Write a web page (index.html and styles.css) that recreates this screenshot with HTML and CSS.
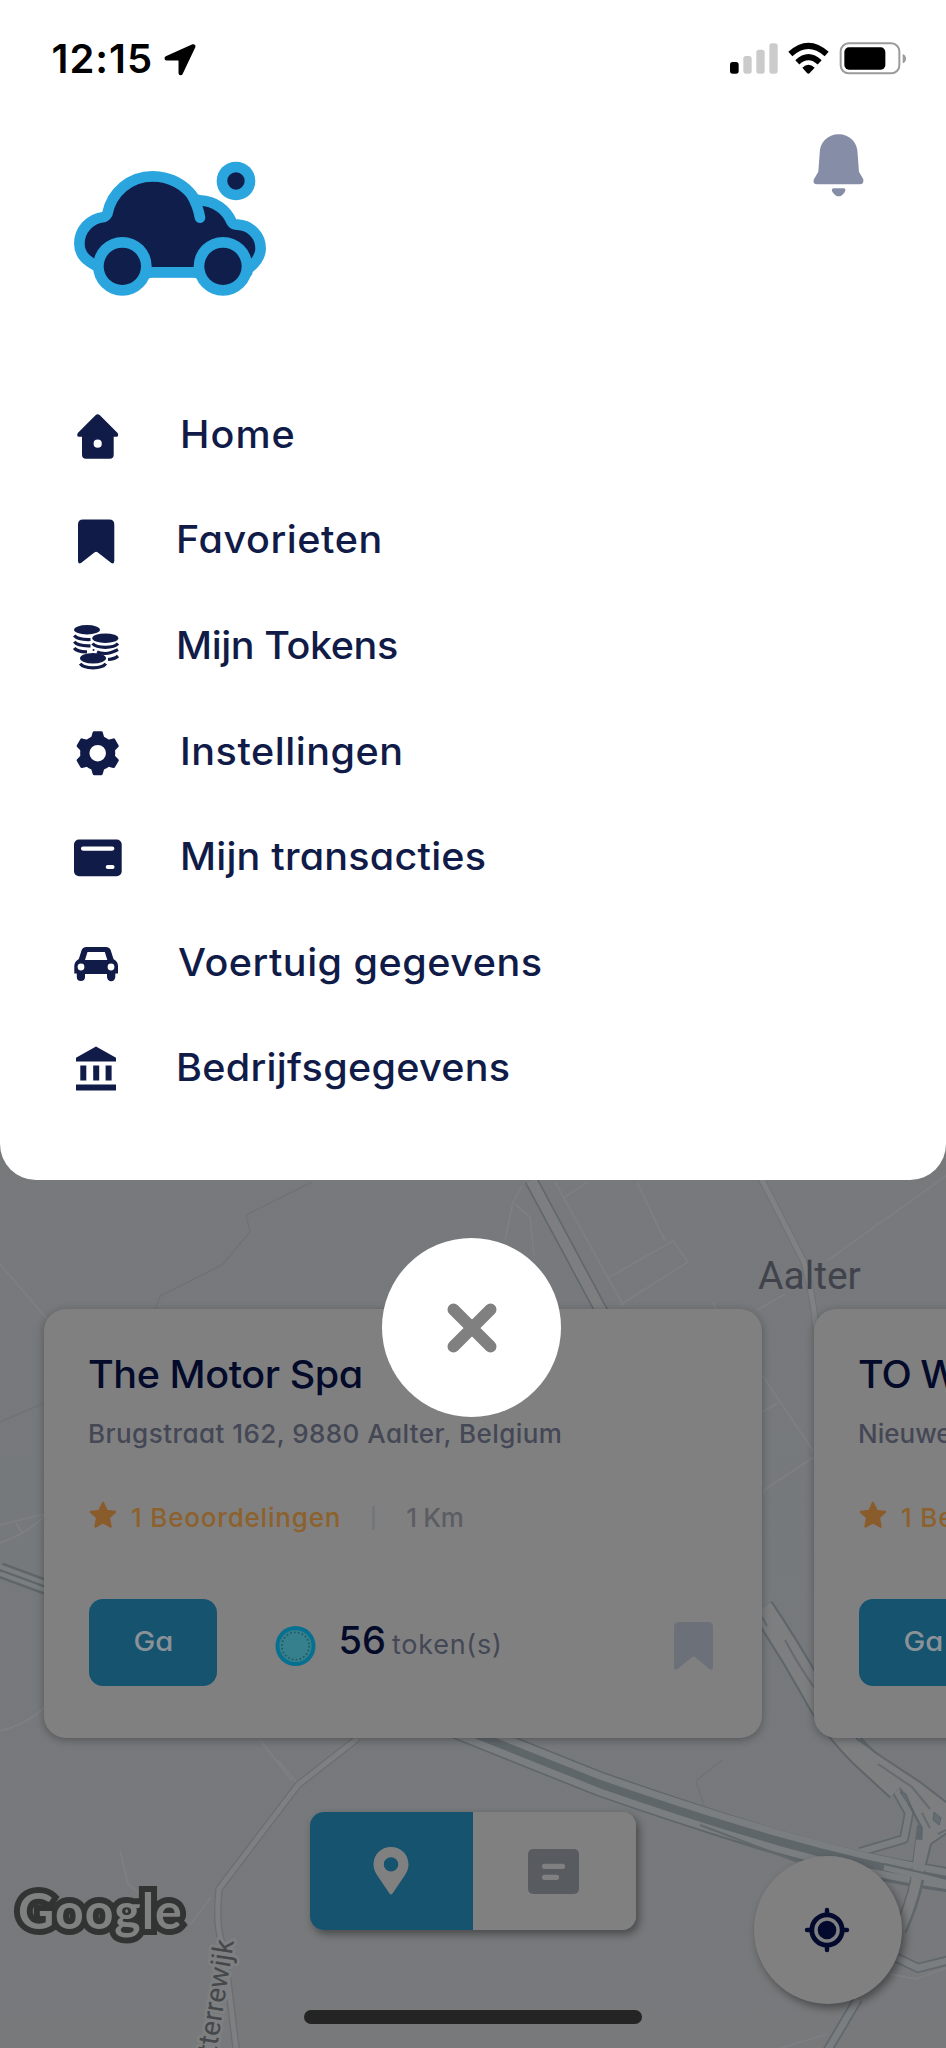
FILE: index.html
```
<!DOCTYPE html>
<html lang="nl">
<head>
<meta charset="utf-8">
<title>Menu</title>
<link rel="stylesheet" href="styles.css">
</head>
<body>
<div class="phone">
  <svg class="map" viewBox="0 1140 946 908" aria-hidden="true">
    <defs>
      <linearGradient id="land" x1="0" y1="0" x2="0" y2="1">
        <stop offset="0" stop-color="#77797b"/><stop offset=".4" stop-color="#76797c"/><stop offset="1" stop-color="#77797b"/>
      </linearGradient>
    </defs>
    <rect x="0" y="1140" width="946" height="908" fill="url(#land)"/>
    <!-- water courses and parcel borders -->
    <g fill="none" stroke="#707375" stroke-width="1.5">
      <path d="M312 1182L246 1215L250 1232L222 1265L160 1296L155 1310"/>
      <path d="M0 1422L44 1403"/>
      <path d="M722 1760L696 1781L704 1805"/>
    </g>
    <g fill="none" stroke="#7d7f81" stroke-width="1.800">
      <path d="M0 1264L48 1320"/>
      <path d="M0 1525L44 1514M16 1523L22 1532M0 1543Q30 1532 44 1516"/>
      <path d="M0 1731Q28 1724 46 1706"/>
      <path d="M522 1186L513 1202L505 1240M515 1204L530 1217L534 1255"/>
      <path d="M555 1182L608 1278L624 1306M563 1198L588 1182M637 1182L665 1241M608 1278L673 1241L688 1262L620 1305"/>
      <path d="M946 1176L828 1260M757 1310L785 1294M713 1302L716 1310"/>
      <path d="M762 1375L814 1452M762 1412L778 1403M814 1457L764 1490L764 1494"/>
      <path d="M260 1740L292 1781M278 1760L298 1784M120 1850L128 1884L142 1896M211 1897L190 1925"/>
      <path d="M889 1974L916 1979L946 1968M780 2048L828 2034"/>
    </g>
    <!-- secondary roads -->
    <g fill="none" stroke-linejoin="round">
      <path d="M761 1178L804 1262Q814 1300 816 1330" stroke="#6f7274" stroke-width="7"/>
      <path d="M761 1178L804 1262Q814 1300 816 1330" stroke="#7f8182" stroke-width="5"/>
      <path d="M358 1738L298 1785L219 1889Q215 1930 224 1948L236 2048" stroke="#6b6e70" stroke-width="7.5"/>
      <path d="M358 1738L298 1785L219 1889Q215 1930 224 1948L236 2048" stroke="#7d7f80" stroke-width="5"/>
      <path d="M860 1852L904 1839L909 1813L894 1786M897 1958L918 1968L950 1960M858 1999L823 2058" stroke="#61686c" stroke-width="10"/>
      <path d="M860 1852L904 1839L909 1813L894 1786M897 1958L918 1968L950 1960M858 1999L823 2058" stroke="#7b7e80" stroke-width="6.5"/>
    </g>
    <!-- motorway -->
    <g fill="none">
      <path d="M531 1180L604 1316" stroke="#5f676a" stroke-width="13.5"/>
      <path d="M531 1180L604 1316" stroke="#7d7e7f" stroke-width="10.5"/>
      <path d="M0 1570L46 1587" stroke="#5f666a" stroke-width="16"/>
      <path d="M0 1566.500L46 1583.500M0 1573.500L46 1590.500" stroke="#7a7e81" stroke-width="4.500"/>
      <path d="M455 1726L600 1784Q700 1819 780 1843T950 1880" stroke="#5f666a" stroke-width="25"/>
      <path d="M455 1718L600 1776Q700 1811 785 1835T950 1873M455 1734L600 1792Q700 1827 785 1851T950 1886" stroke="#7a7e81" stroke-width="7"/>
      <path d="M700 1825L798 1862" stroke="#62696c" stroke-width="2"/>
      <path d="M762 1608Q790 1650 814 1693Q830 1724 862 1756L898 1789" stroke="#5f666a" stroke-width="25"/>
      <path d="M762 1608Q790 1650 814 1693Q830 1724 862 1756L898 1789" stroke="#7c7e7f" stroke-width="21"/>
      <path d="M785 1640Q800 1668 816 1690M762 1617L767 1626" stroke="#656b6e" stroke-width="2"/>
    </g>
    <!-- junction -->
    <path d="M921 1828L924 1826L917 1880Q912 1905 900 1930" fill="none" stroke="#5f676b" stroke-width="14"/>
    <path d="M868 1750L882 1757L920 1782L950 1805V1833L930 1846L924 1872H917L922 1828L905 1792L882 1772Z" fill="#7c7e7f"/>
    <path d="M856 1738L882 1757L920 1782L950 1805M950 1831L931 1844L925 1868M920 1868L922 1828L901 1790" fill="none" stroke="#5f676b" stroke-width="2"/>
    <path d="M921 1840L916 1882Q911 1905 900 1930" fill="none" stroke="#7c7e7f" stroke-width="10"/>
    <path d="M884 1867L950 1884" stroke="#7a7e81" stroke-width="6"/><path d="M884 1859L950 1873" stroke="#7a7e81" stroke-width="5"/>
    <path d="M884 1864L950 1879" stroke="#5f666a" stroke-width="2"/>
    <path d="M900 1792L906 1794L918 1822L910 1806ZM934 1812L941 1818L939 1825L933 1820Z" fill="#636d73" stroke="#5b646a"/>
    <path d="M922 1813L930 1828M878 1764L912 1787L930 1809M938 1834L946 1830" fill="none" stroke="#656b6e" stroke-width="2"/>
    <text class="town" x="758" y="1289">Aalter</text>
    <text class="road-name" transform="translate(234 1941) rotate(-81)" text-anchor="end">tterrewijk</text>
    <text class="google" x="18" y="1929">Google</text>
  </svg>

  <header class="menu">
    <div class="status">
      <span class="time">12:15</span>
      <svg class="arrow" viewBox="490 126 104 104"><path d="M581 139L501 175H543V219Z" fill="#000" stroke="#000" stroke-width="13" stroke-linejoin="round"/></svg>
      <svg class="signals" viewBox="260 120 545 110">
        <rect x="269" y="186" width="26" height="35" rx="8"/>
        <g fill="#cbcbcb"><rect x="309" y="168" width="25" height="53" rx="8"/><rect x="348" y="149" width="25" height="72" rx="8"/><rect x="387" y="130" width="25" height="91" rx="8"/></g>
        <path d="M450 162Q504 113 559 162M471 187Q504 156 538 187" fill="none" stroke="#000" stroke-width="18"/>
        <path d="M486 203Q504 186 523 203L508 219Q504 223 500 219Z"/>
        <rect x="601" y="130" width="176" height="90" rx="24" fill="#fff" stroke="#9b9b9b" stroke-width="6"/>
        <rect x="612" y="142" width="123" height="67" rx="14"/>
        <path d="M787 162Q797 166 797 176T787 190Z" fill="#9b9b9b"/>
      </svg>
    </div>

    <div class="brand">
      <svg class="logo" viewBox="210 470 600 430">
        <path d="M300 802C262 785 238 765 238 730C238 690 268 655 312 650Q318 648 322 640C335 575 390 528 458 528C512 528 555 555 580 590Q584 598 600 600C645 602 680 628 695 665Q698 672 712 673C752 675 782 705 782 745C782 770 765 790 742 808V816H300Z" fill="#0f1e4a" stroke="#2aa5de" stroke-width="32" stroke-linejoin="round"/>
        <path d="M574 582C588 606 596 628 600 652" fill="none" stroke="#2aa5de" stroke-width="32" stroke-linecap="round"/>
        <path d="M420 862Q442 831 458 831H580Q594 831 616 862L620 800H416Z" fill="#2aa5de"/>
        <g fill="#2aa5de"><circle cx="367" cy="798" r="88"/><circle cx="669" cy="798" r="88"/><circle cx="708" cy="542" r="58"/></g>
        <g fill="#0f1e4a"><circle cx="367" cy="798" r="56"/><circle cx="669" cy="798" r="56"/><circle cx="708" cy="542" r="26"/></g>
      </svg>
      <svg class="bell" viewBox="515 395 160 200" fill="#858ea6">
        <path d="M595 402C628 402 652 426 652 460L656 514L669 537Q672 552 658 552H531Q517 552 520 538L534 514L538 460C538 426 562 402 595 402Z"/>
        <path d="M580 564H611Q619 566 612 577Q604 588 595 588Q586 588 578 577Q570 566 580 564Z"/>
      </svg>
    </div>

    <nav class="nav">
      <a class="item wide"><svg class="icon" viewBox="0 0 56 56"><path fill-rule="evenodd" d="M25.500 9.300Q27.700 7.300 29.900 9.300L47.600 27Q49.200 30.700 46.400 30.700H43.700V48.700Q43.700 52.700 39.700 52.700H16Q12 52.700 12 48.700V30.700H9Q6.200 30.700 7.800 27ZM27.700 33.600A4.100 4.100 0 1 0 27.700 41.800A4.100 4.100 0 1 0 27.700 33.600Z"/></svg><span class="label l-home">Home</span></a>
      <a class="item"><svg class="icon" viewBox="0 0 56 56"><path d="M13 8.400H39.300Q44.300 8.400 44.300 13.400V50Q44.300 53.500 41.300 52L27.500 41.200Q26.100 40.200 24.700 41.200L11 52Q8 53.500 8 50V13.400Q8 8.400 13 8.400Z"/></svg><span class="label l-fav">Favorieten</span></a>
      <a class="item"><svg class="icon" viewBox="0 0 56 56">
        <ellipse cx="17" cy="12.800" rx="13" ry="4.700"/><ellipse cx="35.300" cy="21.200" rx="13" ry="4.800"/><ellipse cx="23" cy="41.200" rx="13" ry="5.200"/>
        <path fill="none" stroke="#101b48" stroke-width="3.200" d="M4.200 18.500Q8 23 20.500 22.500M4.200 24.800Q8 29.300 20.500 28.800M4.200 31Q7 35 17 34.800M22.500 26.500Q26 30.300 35.300 30.300T48 26.500M27 35Q30 36.500 35.300 36.500T48 32.700M38 42.500Q45 42 48 39M10.200 46.700Q13 50.800 23 50.800T35.800 46.700"/><circle cx="23.500" cy="33" r="1"/></svg><span class="label l-tok">Mijn Tokens</span></a>
      <a class="item wide"><svg class="icon" viewBox="0 0 56 56"><g transform="translate(27.700 30.200)"><circle r="12.900" fill="none" stroke="#101b48" stroke-width="9.300"/>
        <g stroke="#101b48" stroke-width="3" stroke-linejoin="round"><path id="tooth" d="M-3.600 -20.500H3.600L5 -15.500H-5Z"/><use href="#tooth" transform="rotate(60)"/><use href="#tooth" transform="rotate(120)"/><use href="#tooth" transform="rotate(180)"/><use href="#tooth" transform="rotate(240)"/><use href="#tooth" transform="rotate(300)"/></g></g></svg><span class="label l-set">Instellingen</span></a>
      <a class="item wide"><svg class="icon" viewBox="0 0 56 56"><rect x="4" y="11.600" width="47.700" height="36.600" rx="5"/><path d="M13 20.600H42.300M37.800 39H42.500" stroke="#fff" stroke-width="4.200" stroke-linecap="round"/></svg><span class="label l-trans">Mijn transacties</span></a>
      <a class="item"><svg class="icon" viewBox="0 0 56 56"><path d="M16.500 13H35.800Q39.800 13 40.800 16.500L43.500 25Q48 27.500 48 32V39.500H45.300V43A4 4 0 0 1 37 43V40H15V43A4 4 0 0 1 6.800 43V39.500H4.300V32Q4.300 27.500 8.800 25L11.500 16.500Q12.500 13 16.500 13Z"/><path fill="#fff" d="M17.500 18H34.800L37.300 26H15Z"/><circle cx="11" cy="33" r="3.400" fill="#fff"/><circle cx="41" cy="33" r="3.400" fill="#fff"/></svg><span class="label l-car">Voertuig gegevens</span></a>
      <a class="item"><svg class="icon" viewBox="0 0 56 56"><path d="M26 7.400L46 18.700V22.400H6V18.700ZM10.300 26.400H16.300V41.400H10.300ZM23.200 26.400H29.200V41.400H23.200ZM35.600 26.400H41.600V41.400H35.600ZM6 45.400H46V51.400H6Z"/></svg><span class="label l-biz">Bedrijfsgegevens</span></a>
    </nav>
  </header>

  <main class="content">
    <div class="cards">
      <article class="card">
        <h2 class="title">The Motor Spa</h2>
        <p class="address">Brugstraat 162, 9880 Aalter, Belgium</p>
        <div class="rating">
          <svg class="star" viewBox="0 0 28 28"><path d="M14 2L17.600 10L26 10.900L19.700 16.600L21.500 25.500L14 21.200L6.500 25.500L8.300 16.600L2 10.900L10.400 10Z"/></svg>
          <span class="reviews">1 Beoordelingen</span><span class="divider"></span><span class="distance">1 Km</span>
        </div>
        <div class="actions">
          <button class="go"><span>Ga</span></button>
          <svg class="token" viewBox="0 0 42 42"><circle cx="21" cy="21" r="20.500" fill="#05708f"/><circle cx="21" cy="21" r="16.500" fill="#367f8c"/><circle cx="21" cy="21" r="14" fill="none" stroke="#1f5660" stroke-width="1.600" stroke-dasharray="1.600 2.400"/></svg>
          <span class="price"><b class="amount">56</b><span class="unit">token(s)</span></span>
          <svg class="save" viewBox="0 0 39 48"><path d="M5 0H34Q39 0 39 5V45.500Q38.500 49 35.500 47L20.500 34.800Q19.500 34.200 18.500 34.800L3.500 47Q.5 49 0 45.500V5Q0 0 5 0Z"/></svg>
        </div>
      </article>
      <article class="card">
        <h2 class="title t2">TO W</h2>
        <p class="address a2">Nieuwe</p>
        <div class="rating">
          <svg class="star" viewBox="0 0 28 28"><path d="M14 2L17.600 10L26 10.900L19.700 16.600L21.500 25.500L14 21.200L6.500 25.500L8.300 16.600L2 10.900L10.400 10Z"/></svg>
          <span class="reviews">1 Be</span>
        </div>
        <div class="actions"><button class="go"><span>Ga</span></button></div>
      </article>
    </div>

    <div class="toggle">
      <button class="tab active"><svg class="pin" viewBox="0 0 36 48"><path fill-rule="evenodd" d="M18 0C28 0 35.500 7.500 35.500 17.500C35.500 22 33.500 26 31 29.500L19.500 46.500Q18 48.500 16.500 46.500L5 29.500C2.500 26 .5 22 .5 17.500C.5 7.500 8 0 18 0ZM18 10.200A7.200 7.200 0 1 0 18 24.600A7.200 7.200 0 1 0 18 10.200Z"/></svg></button>
      <button class="tab"><svg class="list" viewBox="0 0 51 45"><rect width="51" height="45" rx="5" fill="#585c61"/><path d="M16.500 17.300H34.500M16.500 28.300H28.500" stroke="#808080" stroke-width="5.200" stroke-linecap="round"/></svg></button>
    </div>
  </main>

  <button class="locate"><svg viewBox="0 0 46 46"><g fill="none" stroke="#030a2e"><circle cx="23" cy="23" r="15.200" stroke-width="4.800"/><path d="M23 3V7M23 39V43M3 23H7M39 23H43" stroke-width="4.400" stroke-linecap="round"/></g><circle cx="23" cy="23" r="9.300" fill="#030a2e"/></svg></button>
  <button class="close"><svg viewBox="0 0 50 50"><path d="M6.500 6.500L43.500 43.500M43.500 6.500L6.500 43.500" stroke="#808080" stroke-width="12" stroke-linecap="round"/></svg></button>
  <div class="home-bar"></div>
</div>
</body>
</html>
```
FILE: styles.css
```
* { box-sizing: border-box; }
body, h2, p { margin: 0; }
body { width: 946px; font-family: Inter, "Open Sans", sans-serif; font-weight: 500; font-feature-settings: "cv11"; }
button { border: 0; padding: 0; font: inherit; font-feature-settings: inherit; }
svg { display: block; flex: none; }

.phone { position: relative; width: 946px; height: 2048px; overflow: hidden; background: #77797b; }
.map { position: absolute; left: 0; top: 1140px; width: 946px; height: 908px; }
.town { font: 400 39px Roboto, sans-serif; fill: #40434c; }
.road-name { font: 400 28px Roboto, sans-serif; fill: #45484a; stroke: #7d7f81; stroke-width: 6px; paint-order: stroke; stroke-linejoin: round; }
.google { font: 700 50px Lato, sans-serif; letter-spacing: 1px; fill: #808080; stroke: #323434; stroke-width: 12px; paint-order: stroke; }

.menu { position: relative; height: 1180px; background: #fff; border-radius: 0 0 36px 36px; }
.status { display: flex; height: 118px; padding: 0 37.500px 0 51.500px; align-items: center; }
.time { font-size: 40px; font-weight: 600; letter-spacing: 1px; line-height: 48px; }
.arrow { width: 34.700px; height: 34.700px; margin-left: 10px; }
.signals { width: 181.700px; height: 36.700px; margin: -2px 0 0 auto; }
.brand { display: flex; justify-content: space-between; height: 263px; padding: 0 81px 0 70px; }
.logo { width: 200px; height: 143.300px; margin-top: 38.700px; }
.bell { width: 53.300px; height: 66.700px; margin-top: 13.700px; }

.nav { display: flex; flex-direction: column; color: #101b48; }
.item { display: flex; align-items: center; height: 105.600px; padding-left: 70px; }
.icon { width: 56px; height: 56px; fill: #101b48; }
.label { margin-left: 50px; font-size: 38px; line-height: 50px; transform: scaleX(1.04); transform-origin: left; }
.wide .label { margin-left: 54px; }
.l-home { letter-spacing: 1px; }
.l-fav { letter-spacing: .550px; }
.l-tok { letter-spacing: -.400px; }
.l-set { letter-spacing: .500px; }
.l-trans { letter-spacing: .200px; }
.item .l-car { margin-left: 51.500px; letter-spacing: .480px; }
.l-biz { letter-spacing: .290px; }

.content { position: relative; padding-top: 129px; }
.cards { display: flex; gap: 52px; padding-left: 44px; }
.card { flex: none; width: 718px; height: 429px; padding: 40px 45px 0; border-radius: 22px; background: #808080; box-shadow: 0 2px 8px rgba(0, 0, 0, .3); }
.title { margin-left: -1px; font-size: 38px; font-weight: 500; line-height: 50px; letter-spacing: -.420px; color: #030a2a; transform: scaleX(1.04); transform-origin: left; }
.t2 { letter-spacing: -1px; }
.address { margin: 17px 0 0 -1px; font-size: 26px; line-height: 36px; letter-spacing: .450px; color: #444755; white-space: nowrap; }
.a2 { letter-spacing: 0; }
.rating { display: flex; align-items: center; height: 36px; margin-top: 48px; font-size: 26px; line-height: 36px; color: #8d612c; white-space: nowrap; }
.star { width: 28px; height: 28px; margin: -7px 14px 0 0; fill: #8a5c2b; stroke: #8a5c2b; stroke-width: 2.500px; stroke-linejoin: round; }
.reviews { letter-spacing: .800px; }
.divider { width: 3px; height: 24px; margin: 0 31px 0 31px; background: #73767a; }
.distance { color: #5b5d63; letter-spacing: -.370px; }
.actions { display: flex; align-items: center; height: 87px; margin-top: 63px; }
.go { width: 128px; height: 87px; padding: 0 0 3px; border-radius: 14px; background: #15536f; color: #8a9297; font-size: 27px; }
.go span { display: inline-block; transform: scaleX(1.080); }
.token { width: 41px; height: 42px; margin: 7px 0 0 58px; }
.price { display: flex; align-items: baseline; margin-left: 22.500px; line-height: 50px; }
.amount { font-size: 38px; font-weight: 500; color: #030a2a; }
.unit { margin-left: 6px; font-size: 27px; font-weight: 400; letter-spacing: .750px; color: #444755; }
.save { width: 39px; height: 48px; margin: 7px 4px 0 auto; fill: #6b7079; }

.toggle { display: flex; width: 326px; height: 118px; margin: 74px 0 0 310px; border-radius: 14px; overflow: hidden; background: #808080; box-shadow: 3px 4px 8px rgba(0, 0, 0, .4); }
.tab { display: flex; width: 163px; height: 118px; padding-right: 2px; align-items: center; justify-content: center; background: #808080; }
.active { background: #15536f; }
.pin { width: 36px; height: 48px; fill: #808080; }
.list { width: 51px; height: 45px; }

.locate { position: absolute; left: 754px; top: 1856px; display: grid; width: 148px; height: 148px; padding-right: 2px; place-items: center; border-radius: 50%; background: #808080; box-shadow: 3px 4px 8px rgba(0, 0, 0, .4); }
.locate svg { width: 46px; height: 46px; }
.close { position: absolute; left: 382px; top: 1238px; display: grid; width: 179px; height: 179px; place-items: center; border-radius: 50%; background: #fff; }
.close svg { width: 50px; height: 50px; }
.home-bar { position: absolute; left: 304px; top: 2010px; width: 338px; height: 14px; border-radius: 7px; background: #242425; }
```
